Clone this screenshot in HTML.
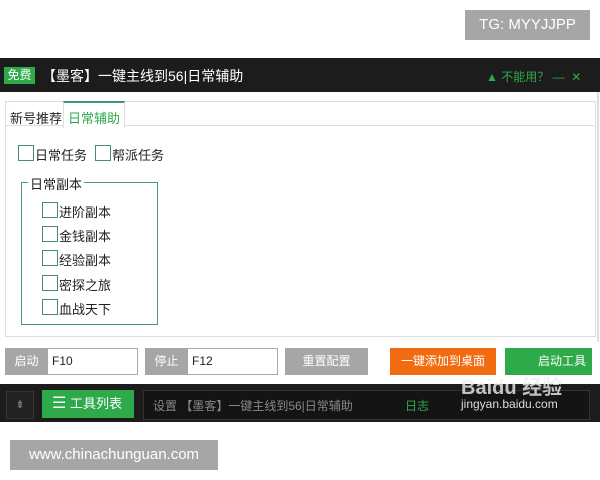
<!DOCTYPE html><html><head><meta charset="utf-8"><style>
body{margin:0;width:600px;height:480px;background:#fff;position:relative;font-family:"Liberation Sans","Noto Sans CJK SC",sans-serif;overflow:hidden}
.a{position:absolute}
.cb{position:absolute;width:14px;height:14px;border:1px solid #4a8a78;background:#fff}
.t{position:absolute;font-size:13px;color:#222}
</style></head><body>
<div class="a" style="left:465px;top:10px;width:125px;height:30px;background:#a6a6a6;color:#fff;font-size:15px;line-height:30px;text-align:center">TG: MYYJJPP</div>
<div class="a" style="left:0;top:58px;width:600px;height:34px;background:#1c1c1c"></div>
<div class="a" style="left:4px;top:67px;width:31px;height:17px;background:#2eaa4a;color:#fff;font-size:12px;line-height:17px;text-align:center">免费</div>
<div class="a" style="left:42px;top:66px;color:#fff;font-size:14px">【墨客】一键主线到56|日常辅助</div>
<div class="a" style="left:486px;top:68px;color:#2eaa4a;font-size:12px">▲ 不能用？ —&nbsp;&nbsp;✕</div>
<div class="a" style="left:0;top:92px;width:597px;height:250px;background:#fff;border-right:2px solid #ddd"></div>
<div class="a" style="left:5px;top:101px;width:589px;height:234px;border:1px solid #ddd"></div>
<div class="a" style="left:5px;top:101px;width:589px;height:24px;border-bottom:1px solid #ddd"></div>
<div class="t" style="left:10px;top:108px">新号推荐</div>
<div class="a" style="left:63px;top:101px;width:60px;height:25px;background:#fff;border:1px solid #ddd;border-top:2px solid #3a9a7a;border-bottom:none"></div>
<div class="t" style="left:68px;top:108px;color:#2eaa4a">日常辅助</div>
<div class="cb" style="left:18px;top:145px"></div><div class="t" style="left:35px;top:145px">日常任务</div>
<div class="cb" style="left:95px;top:145px"></div><div class="t" style="left:112px;top:145px">帮派任务</div>
<div class="a" style="left:21px;top:182px;width:135px;height:141px;border:1px solid #4a9a7a"></div>
<div class="t" style="left:28px;top:174px;background:#fff;padding:0 2px">日常副本</div>
<div class="cb" style="left:42px;top:202px"></div><div class="t" style="left:59px;top:202px">进阶副本</div>
<div class="cb" style="left:42px;top:226px"></div><div class="t" style="left:59px;top:226px">金钱副本</div>
<div class="cb" style="left:42px;top:250px"></div><div class="t" style="left:59px;top:250px">经验副本</div>
<div class="cb" style="left:42px;top:275px"></div><div class="t" style="left:59px;top:275px">密探之旅</div>
<div class="cb" style="left:42px;top:299px"></div><div class="t" style="left:59px;top:299px">血战天下</div>
<div class="a" style="left:5px;top:348px;width:131px;height:25px;border:1px solid #aaa;background:#fff"></div>
<div class="a" style="left:5px;top:348px;width:43px;height:27px;background:#a6a6a6;color:#fff;font-size:12px;line-height:27px;text-align:center">启动</div>
<div class="t" style="left:52px;top:354px;font-size:12px">F10</div>
<div class="a" style="left:145px;top:348px;width:131px;height:25px;border:1px solid #aaa;background:#fff"></div>
<div class="a" style="left:145px;top:348px;width:43px;height:27px;background:#a6a6a6;color:#fff;font-size:12px;line-height:27px;text-align:center">停止</div>
<div class="t" style="left:192px;top:354px;font-size:12px">F12</div>
<div class="a" style="left:285px;top:348px;width:83px;height:27px;background:#a6a6a6;color:#fff;font-size:12px;line-height:27px;text-align:center">重置配置</div>
<div class="a" style="left:390px;top:348px;width:106px;height:27px;background:#f26b10;color:#fff;font-size:12px;line-height:27px;text-align:center">一键添加到桌面</div>
<div class="a" style="left:505px;top:348px;width:87px;height:27px;background:#2eaa4a;color:#fff;font-size:12px;line-height:27px;text-align:right;padding-right:6px;box-sizing:border-box">启动工具</div>
<div class="a" style="left:0;top:384px;width:600px;height:38px;background:#1c1c1c"></div>
<div class="a" style="left:6px;top:391px;width:26px;height:26px;background:#222;border:1px solid #333;color:#888;font-size:11px;text-align:center;line-height:26px">⇟</div>
<div class="a" style="left:42px;top:390px;width:92px;height:28px;background:#2eaa4a;color:#fff;font-size:13px;line-height:28px"><span style="margin-left:10px;font-size:16px">☰</span> 工具列表</div>
<div class="a" style="left:143px;top:390px;width:445px;height:28px;background:#141414;border:1px solid #333"></div>
<div class="a" style="left:153px;top:397px;color:#888;font-size:12px">设置 【墨客】一键主线到56|日常辅助</div>
<div class="a" style="left:405px;top:397px;color:#2eaa4a;font-size:12px">日志</div>
<div class="a" style="left:461px;top:371px;color:#eee;font-size:20px;font-weight:bold;opacity:.8">Baidu 经验</div>
<div class="a" style="left:461px;top:397px;color:#ddd;font-size:12px">jingyan.baidu.com</div>
<div class="a" style="left:10px;top:440px;width:208px;height:30px;background:#a6a6a6;color:#fff;font-size:15px;line-height:30px;text-align:center">www.chinachunguan.com</div>
</body></html>
